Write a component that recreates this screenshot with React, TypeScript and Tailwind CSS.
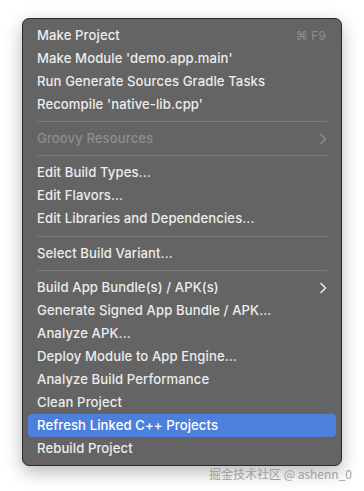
import React from 'react';

type Item =
  | { type: 'sep' }
  | { type: 'item'; label: string; shortcut?: string; submenu?: boolean; disabled?: boolean; active?: boolean };

const items: Item[] = [
  { type: 'item', label: 'Make Project', shortcut: '⌘ F9' },
  { type: 'item', label: "Make Module 'demo.app.main'" },
  { type: 'item', label: 'Run Generate Sources Gradle Tasks' },
  { type: 'item', label: "Recompile 'native-lib.cpp'" },
  { type: 'sep' },
  { type: 'item', label: 'Groovy Resources', submenu: true, disabled: true },
  { type: 'sep' },
  { type: 'item', label: 'Edit Build Types...' },
  { type: 'item', label: 'Edit Flavors...' },
  { type: 'item', label: 'Edit Libraries and Dependencies...' },
  { type: 'sep' },
  { type: 'item', label: 'Select Build Variant...' },
  { type: 'sep' },
  { type: 'item', label: 'Build App Bundle(s) / APK(s)', submenu: true },
  { type: 'item', label: 'Generate Signed App Bundle / APK...' },
  { type: 'item', label: 'Analyze APK...' },
  { type: 'item', label: 'Deploy Module to App Engine...' },
  { type: 'item', label: 'Analyze Build Performance' },
  { type: 'item', label: 'Clean Project' },
  { type: 'item', label: 'Refresh Linked C++ Projects', active: true },
  { type: 'item', label: 'Rebuild Project' },
];

const Chevron = ({ dim }: { dim?: boolean }) => (
  <svg width="8" height="12" viewBox="0 0 8 12" fill="none">
    <path
      d="M2 1.5 L6.5 6 L2 10.5"
      stroke={dim ? '#8c8c8c' : '#ececec'}
      strokeWidth="1.6"
      strokeLinecap="round"
      strokeLinejoin="round"
    />
  </svg>
);

const App = () => {
  return (
    <div className="w-[364px] h-[491px] bg-white overflow-hidden font-['Inter','Liberation_Sans',sans-serif]">
      <div className="pt-[18px] pl-[22px]">
        {/* Menu panel */}
        <div className="w-[320px] rounded-[7px] bg-[#646464] border border-[#2a2a2a] shadow-[0_6px_18px_rgba(0,0,0,0.28)] py-[5px]">
          {items.map((item, i) =>
            item.type === 'sep' ? (
              <div key={i} className={'flex items-center px-[14px] ' + (i === 10 ? 'h-[12px]' : 'h-[11px]')}>
                <div className="h-px w-full bg-[#7b7b7b]" />
              </div>
            ) : (
              <div
                key={i}
                className={
                  'h-[23px] mx-[5px] px-[9px] flex items-center justify-between rounded-[4px] text-[13.1px] font-medium tracking-[0.1px] ' +
                  (item.active ? 'bg-[#4d80dc] text-white ' : '') +
                  (item.disabled ? 'text-[#8d8d8d]' : 'text-[#ececec]')
                }
              >
                <span>{item.label}</span>
                {item.shortcut && (
                  <span className="text-[12px] font-normal text-[#8e8e8e] pr-[1px]">{item.shortcut}</span>
                )}
                {item.submenu && <Chevron dim={item.disabled} />}
              </div>
            )
          )}
        </div>
        {/* watermark */}
        <div className="flex justify-end pr-[12px] mt-[0px]">
          <span className="text-[12px] leading-[16px] text-[#a0a0a0] font-['Noto_Sans_CJK_SC','Liberation_Sans',sans-serif]">
            掘金技术社区 @ ashenn_0
          </span>
        </div>
      </div>
    </div>
  );
};

export default App;
